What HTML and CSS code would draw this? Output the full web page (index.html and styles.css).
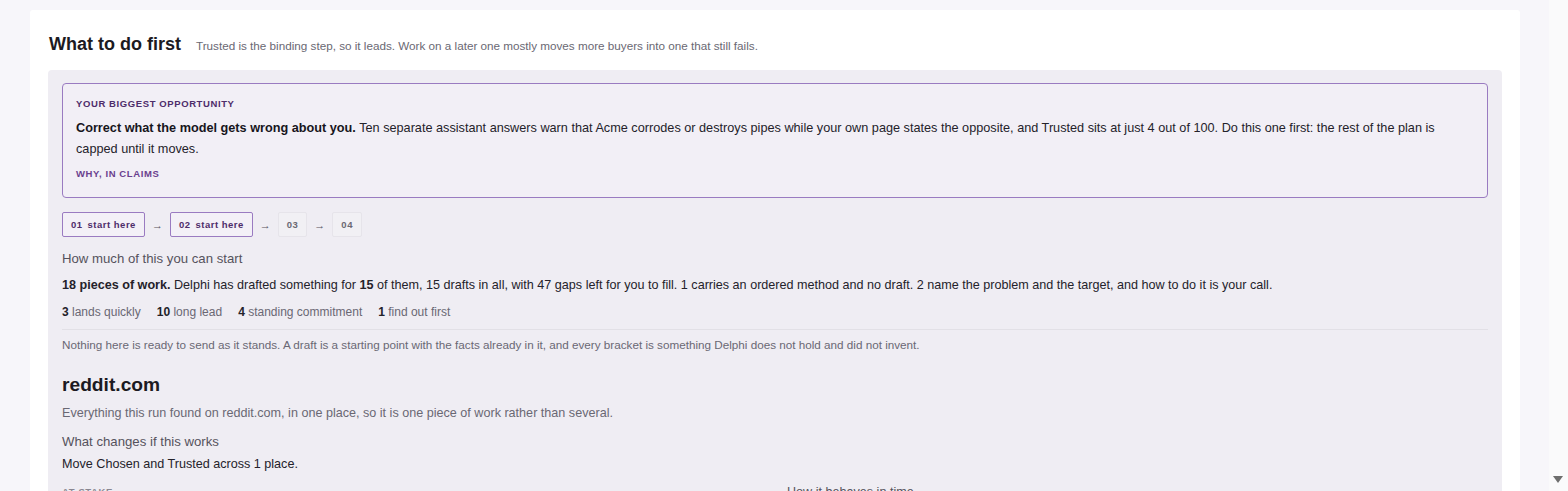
FILE: index.html
```html
<!DOCTYPE html>
<html lang="en">
<head>
<meta charset="utf-8">
<title>What to do first</title>
<link rel="stylesheet" href="styles.css">
</head>
<body>
<main class="page">
  <section class="card">
    <header class="card-head">
      <h2 class="title">What to do first</h2>
      <p class="subtitle">Trusted is the binding step, so it leads. Work on a later one mostly moves more buyers into one that still fails.</p>
    </header>
    <div class="panel">
      <div class="opportunity">
        <div class="eyebrow">Your biggest opportunity</div>
        <p class="opp-text"><strong>Correct what the model gets wrong about you.</strong> Ten separate assistant answers warn that Acme corrodes or destroys pipes while your own page states the opposite, and Trusted sits at just 4 out of 100. Do this one first: the rest of the plan is capped until it moves.</p>
        <div class="eyebrow link">Why, in claims</div>
      </div>
      <div class="steps">
        <span class="step on"><span class="num">01</span>start here</span>
        <span class="arrow">→</span>
        <span class="step on"><span class="num">02</span>start here</span>
        <span class="arrow">→</span>
        <span class="step">03</span>
        <span class="arrow">→</span>
        <span class="step">04</span>
      </div>
      <h3 class="label">How much of this you can start</h3>
      <p class="summary"><strong>18 pieces of work.</strong> Delphi has drafted something for <strong>15</strong> of them, 15 drafts in all, with 47 gaps left for you to fill. 1 carries an ordered method and no draft. 2 name the problem and the target, and how to do it is your call.</p>
      <ul class="stats">
        <li><b>3</b> lands quickly</li>
        <li><b>10</b> long lead</li>
        <li><b>4</b> standing commitment</li>
        <li><b>1</b> find out first</li>
      </ul>
      <p class="note">Nothing here is ready to send as it stands. A draft is a starting point with the facts already in it, and every bracket is something Delphi does not hold and did not invent.</p>
      <h2 class="site">reddit.com</h2>
      <p class="site-desc">Everything this run found on reddit.com, in one place, so it is one piece of work rather than several.</p>
      <h3 class="label">What changes if this works</h3>
      <p class="change">Move Chosen and Trusted across 1 place.</p>
      <div class="cols">
        <div class="col"><div class="small-cap">At stake</div><p class="filler">Two answers in the sample.</p></div>
        <div class="col"><div class="col-label">How it behaves in time</div><p class="filler">Lands over weeks.</p></div>
      </div>
    </div>
  </section>
</main>
<div class="scrollbar" aria-hidden="true"><span class="scroll-down"></span></div>
</body>
</html>
```

FILE: styles.css
```css
* { box-sizing: border-box; }
html, body { margin: 0; padding: 0; }
body {
  background: #f7f6fa;
  font-family: "Liberation Sans", Arial, sans-serif;
  color: #1f1d24;
}
.page {
  padding: 10px 48px 0 30px;
}
.card {
  background: #ffffff;
  padding: 23px 18px 40px 18px;
  border-radius: 3px;
}
.card-head {
  display: flex;
  align-items: baseline;
  gap: 15px;
  margin-bottom: 15px;
  padding-left: 1px;
}
.title {
  margin: 0;
  font-size: 18px;
  line-height: 22px;
  font-weight: 700;
  color: #1c1a22;
}
.subtitle {
  margin: 0;
  font-size: 11.7px;
  color: #6a6873;
}
.panel {
  background: #efedf3;
  border-radius: 4px;
  padding: 13px 14px 20px 14px;
}
.opportunity {
  border: 1px solid #9a7bc1;
  border-radius: 4px;
  background: #f2eff6;
  padding: 14px 13px 17px 13px;
}
.eyebrow {
  font-size: 9.5px;
  line-height: 12px;
  font-weight: 700;
  text-transform: uppercase;
  letter-spacing: 0.6px;
  color: #4e2d6b;
}
.eyebrow.link { color: #6a3f8e; }
.opp-text {
  margin: 8px 0 8px;
  font-size: 12.7px;
  line-height: 21px;
  color: #24222a;
}
.opp-text strong { color: #17151c; }
.steps {
  display: flex;
  align-items: center;
  gap: 6px;
  margin: 14px 0 14px;
}
.step {
  font-family: "Liberation Sans", Arial, sans-serif;
  font-size: 9.5px;
  line-height: 11px;
  font-weight: 700;
  letter-spacing: 0.5px;
  color: #6a6873;
  padding: 6px 8px;
  border: 1px solid #e6e4ea;
  background: #f1f0f4;
  border-radius: 2px;
}
.step .num { margin-right: 5px; }
.step.on {
  color: #4e2d6b;
  border-color: #9a7bc1;
  background: #f3f0f7;
}
.arrow {
  font-size: 11px;
  color: #55525c;
  margin: 0 1px;
}
.label {
  margin: 0;
  font-size: 13.2px;
  line-height: 16px;
  font-weight: 400;
  color: #55525c;
}
.summary {
  margin: 10px 0 11px;
  font-size: 12.6px;
  line-height: 16px;
  color: #24222a;
}
.stats {
  list-style: none;
  display: flex;
  gap: 16px;
  margin: 0;
  padding: 0 0 9px;
  font-size: 12px;
  line-height: 16px;
  color: #6a6873;
  border-bottom: 1px solid #e2e0e6;
}
.stats b { color: #24222a; }
.note {
  margin: 7px 0 0;
  font-size: 11.7px;
  line-height: 15px;
  color: #6a6873;
}
.site {
  margin: 21px 0 0;
  font-size: 19.2px;
  line-height: 24px;
  font-weight: 700;
  color: #1c1a22;
}
.site-desc {
  margin: 8px 0 13px;
  font-size: 12.6px;
  line-height: 16px;
  color: #6a6873;
}
.change {
  margin: 6px 0 14px;
  font-size: 12.6px;
  line-height: 16px;
  color: #24222a;
}
.cols {
  display: grid;
  grid-template-columns: 1fr 1fr;
  gap: 24px;
}
.small-cap {
  font-size: 9.5px;
  line-height: 12px;
  font-weight: 700;
  letter-spacing: 0.6px;
  text-transform: uppercase;
  color: #8a8791;
}
.col-label {
  font-size: 12.6px;
  line-height: 12px;
  color: #55525c;
}
.filler {
  margin: 8px 0 0;
  font-size: 12.6px;
  color: #24222a;
}
.scrollbar {
  position: fixed;
  top: 0;
  right: 0;
  bottom: 0;
  width: 19px;
  background: #fafafb;
}
.scroll-down {
  position: absolute;
  left: 4px;
  bottom: 8px;
  width: 0;
  height: 0;
  border-left: 5px solid transparent;
  border-right: 5px solid transparent;
  border-top: 7px solid #6e6e6e;
}
```
